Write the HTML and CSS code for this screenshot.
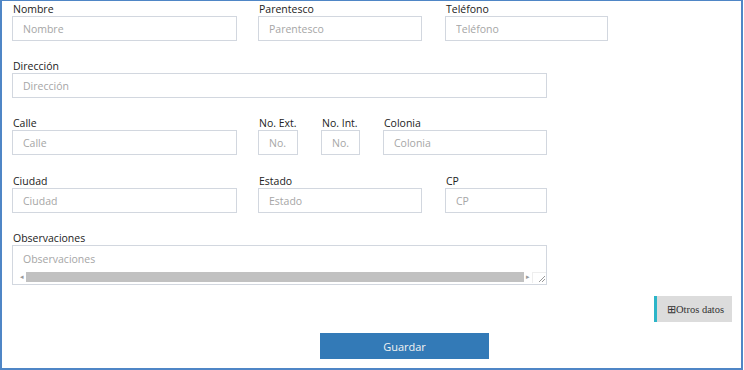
FILE: index.html
```html
<!DOCTYPE html>
<html lang="es">

<head>
  <meta charset="UTF-8">
  <title>Contacto</title>
  <link rel="stylesheet" href="styles.css">
</head>

<body>
  <div class="frame">

    <!-- Datos del contacto -->
    <div class="row">
      <div class="field w-main">
        <label>Nombre</label>
        <input type="text" placeholder="Nombre">
      </div>
      <div class="field w-mid">
        <label>Parentesco</label>
        <input type="text" placeholder="Parentesco">
      </div>
      <div class="field w-phone">
        <label>Teléfono</label>
        <input type="text" placeholder="Teléfono">
      </div>
    </div>

    <div class="row">
      <div class="field w-full">
        <label>Dirección</label>
        <input type="text" placeholder="Dirección">
      </div>
    </div>

    <div class="row">
      <div class="field w-main">
        <label>Calle</label>
        <input type="text" placeholder="Calle">
      </div>
      <div class="field w-num">
        <label>No. Ext.</label>
        <input type="text" placeholder="No.">
      </div>
      <div class="field w-num">
        <label>No. Int.</label>
        <input type="text" placeholder="No.">
      </div>
      <div class="field w-mid">
        <label>Colonia</label>
        <input type="text" placeholder="Colonia">
      </div>
    </div>

    <div class="row row-city">
      <div class="field w-main">
        <label>Ciudad</label>
        <input type="text" placeholder="Ciudad">
      </div>
      <div class="field w-mid">
        <label>Estado</label>
        <input type="text" placeholder="Estado">
      </div>
      <div class="field w-cp">
        <label>CP</label>
        <input type="text" placeholder="CP">
      </div>
    </div>

    <!-- Observaciones -->
    <div class="row last">
      <div class="field w-full">
        <label>Observaciones</label>
        <div class="memo">
          <textarea placeholder="Observaciones"></textarea>
          <div class="hscroll">
            <span class="arrow">&#9666;</span>
            <span class="thumb"></span>
            <span class="arrow">&#9656;</span>
            <span class="grip">
              <svg width="8" height="8" viewBox="0 0 8 8">
                <path d="M7 1L1 7M7 4L4 7" stroke="#999" stroke-width="1" fill="none"/>
              </svg>
            </span>
          </div>
        </div>
      </div>
    </div>

    <div class="more-row">
      <button class="btn-more">&#8862;Otros datos</button>
    </div>

    <div class="save-row">
      <button class="btn-save">Guardar</button>
    </div>
  </div>
</body>

</html>
```

FILE: styles.css
```css
body {
  margin: 0;
  padding: 0;
  background: #fff;
  font-family: 'Open Sans', sans-serif;
  font-size: 10.5px;
  color: #222;
}

/* Marco azul */
.frame {
  box-sizing: border-box;
  width: 743px;
  height: 370px;
  border: 2px solid #4f86c6;
  border-top-width: 1px;
  padding: 1px 0 0 10px;
  display: flex;
  flex-direction: column;
}

.row {
  display: flex;
  gap: 23px;
  margin-bottom: 18px;
}

.row-city {
  margin-top: 1px;
}

.row.last {
  margin-bottom: 0;
}

.field label {
  display: block;
  height: 14px;
  line-height: 14px;
  padding-left: 1px;
  color: #222;
}

.field input {
  box-sizing: border-box;
  display: block;
  width: 100%;
  height: 25px;
  margin: 0;
  padding: 0 10px;
  border: 1px solid #d2d7df;
  border-radius: 0;
  font-family: 'Open Sans', sans-serif;
  font-size: 10.5px;
  color: #555;
  outline: none;
}

.field input::placeholder,
.memo textarea::placeholder {
  color: #a6a6a6;
}

.w-main { width: 225px; margin-right: -2px; }
.w-mid { width: 164px; }
.w-phone { width: 163px; }
.w-num { width: 40px; }
.w-num + .w-num { width: 39px; }
.w-cp { width: 102px; }
.w-full { width: 535px; }

/* Observaciones */
.memo {
  box-sizing: border-box;
  height: 40px;
  border: 1px solid #d2d7df;
  display: flex;
  flex-direction: column;
}

.memo textarea {
  flex: 1;
  margin: 0;
  padding: 6px 10px 0;
  border: none;
  resize: none;
  overflow: hidden;
  font-family: 'Open Sans', sans-serif;
  font-size: 10.5px;
  outline: none;
}

.hscroll {
  display: flex;
  align-items: center;
  height: 10px;
  margin-bottom: 2px;
  padding-left: 5px;
}

.hscroll .arrow {
  width: 8px;
  font-size: 7px;
  line-height: 10px;
  color: #999;
  text-align: center;
}

.hscroll .thumb {
  width: 498px;
  height: 10px;
  background: #c1c1c1;
}

.hscroll .grip {
  display: flex;
  align-items: flex-end;
  justify-content: flex-end;
  width: 13px;
  height: 10px;
  border-left: 1px solid #eee;
  border-top: 1px solid #eee;
}

/* Botones */
.more-row {
  display: flex;
  justify-content: flex-end;
  margin-top: 11px;
  padding-right: 9px;
}

.btn-more {
  box-sizing: border-box;
  width: 78px;
  height: 26px;
  padding: 0 0 0 10px;
  border: none;
  border-left: 3px solid #2cb5c8;
  background: #dcdcdc;
  font-family: 'Liberation Serif', serif;
  font-size: 10.5px;
  color: #333;
  text-align: left;
}

.save-row {
  margin-top: 11px;
  padding-left: 308px;
}

.btn-save {
  width: 169px;
  height: 26px;
  border: none;
  background: #337ab7;
  color: #f2f2f2;
  font-family: 'Open Sans', sans-serif;
  font-size: 11px;
}
```
